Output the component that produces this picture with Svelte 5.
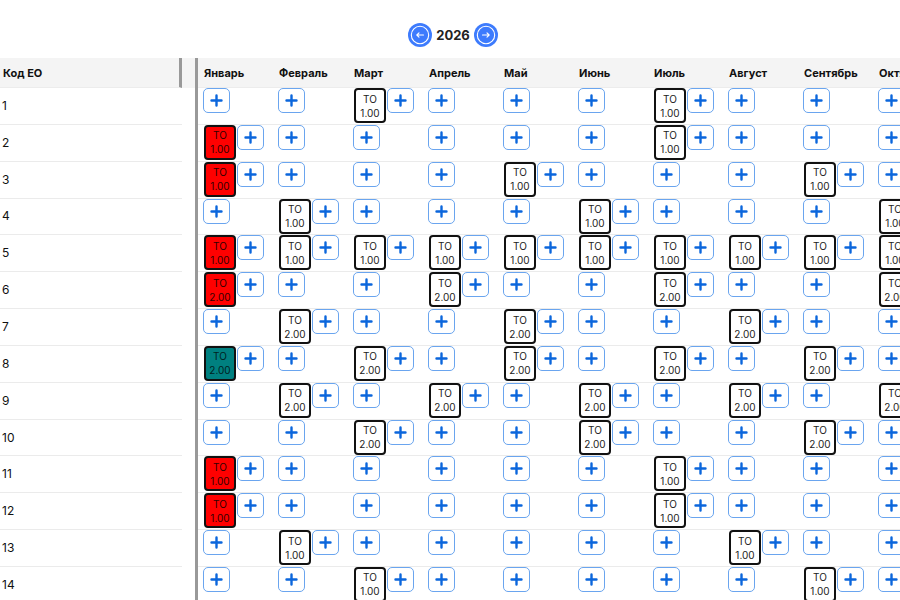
<script lang="ts">
  type Status = 'planned' | 'overdue' | 'done';
  type Job = { month: number; hours: string; status: Status };
  type Unit = { code: number; jobs: Job[] };

  const months = [
    'Январь', 'Февраль', 'Март', 'Апрель', 'Май', 'Июнь',
    'Июль', 'Август', 'Сентябрь', 'Октябрь', 'Ноябрь', 'Декабрь',
  ];

  function unit(code: number, hours: string, planned: number[], first: Status = 'planned'): Unit {
    return {
      code,
      jobs: planned.map((month) => ({ month, hours, status: month === 1 ? first : 'planned' })),
    };
  }

  const units: Unit[] = [
    unit(1, '1.00', [3, 7]),
    unit(2, '1.00', [1, 7], 'overdue'),
    unit(3, '1.00', [1, 5, 9], 'overdue'),
    unit(4, '1.00', [2, 6, 10]),
    unit(5, '1.00', [1, 2, 3, 4, 5, 6, 7, 8, 9, 10], 'overdue'),
    unit(6, '2.00', [1, 4, 7, 10], 'overdue'),
    unit(7, '2.00', [2, 5, 8]),
    unit(8, '2.00', [1, 3, 5, 7, 9], 'done'),
    unit(9, '2.00', [2, 4, 6, 8, 10]),
    unit(10, '2.00', [3, 6, 9]),
    unit(11, '1.00', [1, 7], 'overdue'),
    unit(12, '1.00', [1, 7], 'overdue'),
    unit(13, '1.00', [2, 8]),
    unit(14, '1.00', [3, 9]),
  ];

  let year = $state(2026);
</script>

<div class="planner">
  <header class="year-bar">
    <button type="button" class="year-button" aria-label="Предыдущий год" onclick={() => (year -= 1)}>
      <svg viewBox="0 0 24 24">
        <circle cx="12" cy="12" r="8.7" />
        <path d="M15.5 12H8.8M11 9.8L8.8 12L11 14.2" />
      </svg>
    </button>
    <span class="year">{year}</span>
    <button type="button" class="year-button" aria-label="Следующий год" onclick={() => (year += 1)}>
      <svg viewBox="0 0 24 24">
        <circle cx="12" cy="12" r="8.7" />
        <path d="M8.5 12h6.7M13 9.8l2.2 2.2L13 14.2" />
      </svg>
    </button>
  </header>

  <div class="panes">
    <div class="codes">
      <table>
        <thead>
          <tr><th class="code-head">Код ЕО</th></tr>
        </thead>
        <tbody>
          {#each units as row (row.code)}
            <tr><td class="code">{row.code}</td></tr>
          {/each}
        </tbody>
      </table>
    </div>

    <div class="schedule">
      <table>
        <thead>
          <tr>
            {#each months as month}
              <th class="month">{month}</th>
            {/each}
            <th></th>
          </tr>
        </thead>
        <tbody>
          {#each units as row (row.code)}
            <tr>
              {#each months as month, index}
                {@const job = row.jobs.find((item) => item.month === index + 1)}
                <td>
                  <div class="slot">
                    {#if job}
                      <button type="button" class="job {job.status}">
                        <span>TO</span>
                        <span>{job.hours}</span>
                      </button>
                    {/if}
                    <button type="button" class="add" aria-label="Добавить: {month}">
                      <svg viewBox="0 0 13 13"><path d="M6.5 1.5v10M1.5 6.5h10" /></svg>
                    </button>
                  </div>
                </td>
              {/each}
              <td></td>
            </tr>
          {/each}
        </tbody>
      </table>
    </div>
  </div>
</div>

<style>
  :global(body) {
    overflow: hidden;
    background: #fff;
  }

  .planner {
    height: 100vh;
    overflow: hidden;
    color: #111;
    font-family: Inter, 'Noto Sans', sans-serif;
  }

  button {
    box-sizing: border-box;
    padding: 0;
    font: inherit;
    cursor: pointer;
  }

  .year-bar {
    display: flex;
    align-items: center;
    justify-content: center;
    gap: 4px;
    height: 46px;
    padding: 12px 0 0 6px;
    box-sizing: content-box;
  }

  .year {
    color: #222;
    font-size: 13px;
    font-weight: 700;
    line-height: 24px;
  }

  .year-button {
    width: 24px;
    height: 24px;
    border: 0;
    border-radius: 50%;
    background: #3d7bfd;
  }

  .year-button svg {
    display: block;
    fill: none;
    stroke: #fff;
    stroke-width: 1.1;
    stroke-linecap: round;
    stroke-linejoin: round;
  }

  .panes {
    display: flex;
  }

  .codes {
    flex: 0 0 195px;
    border-right: 3px solid #999;
    background: linear-gradient(#f4f4f4 30px, #fff 30px);
  }

  .codes table {
    width: 182px;
  }

  .schedule {
    flex: 1;
    min-width: 0;
    overflow: hidden;
  }

  .schedule table {
    width: 1000px;
    table-layout: fixed;
  }

  /* body rows share the height left under the header */
  table {
    height: 546px;
    border-spacing: 0;
  }

  th {
    box-sizing: border-box;
    height: 30px;
    padding: 0 0 0 6px;
    border-bottom: 1px solid #ececec;
    background: #f4f4f4;
    font-size: 11px;
    font-weight: 700;
    line-height: 16px;
    text-align: left;
    white-space: nowrap;
  }

  .month {
    width: 75px;
  }

  .code-head {
    padding-left: 3px;
    border-right: 3px solid #999;
  }

  td {
    padding: 0 0 0 5px;
    border-bottom: 1px solid #ebebeb;
    vertical-align: top;
  }

  .code {
    padding-left: 2px;
    font-size: 12px;
    line-height: 16px;
    vertical-align: middle;
  }

  .slot {
    display: flex;
    align-items: flex-start;
  }

  .job {
    display: flex;
    flex-direction: column;
    align-items: center;
    justify-content: center;
    width: 32px;
    height: 35px;
    margin: 0 1px;
    border: 2px solid #111;
    border-radius: 4px;
    background: #fff;
    color: #222;
    font-size: 10px;
    line-height: 14px;
  }

  .job.overdue {
    background: #f00;
    color: #300;
  }

  .job.done {
    background: #008080;
    color: #022;
  }

  .add {
    display: flex;
    align-items: center;
    justify-content: center;
    width: 27px;
    height: 25px;
    border: 1px solid #6aa5ef;
    border-radius: 5px;
    background: #fff;
  }

  .add svg {
    width: 13px;
    height: 13px;
    fill: none;
    stroke: #0b66dc;
    stroke-width: 2.4;
    stroke-linecap: round;
  }
</style>
